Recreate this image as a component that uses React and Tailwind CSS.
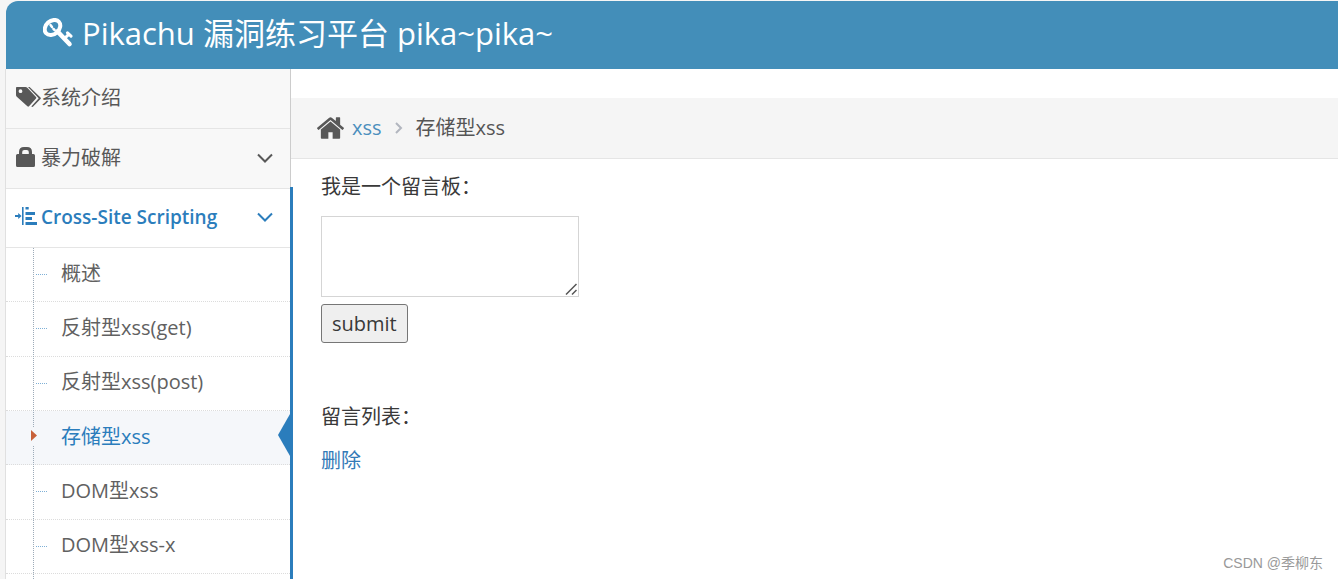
import React from "react";

const HOME =
  "M1472 992v480q0 26-19 45t-45 19h-384v-384h-256v384h-384q-26 0-45-19t-19-45v-480q0-1 .5-3t.5-3l575-474 575 474q1 2 1 6zm223-69l-62 74q-8 9-21 11h-3q-13 0-21-7l-692-577-692 577q-12 8-24 7-13-2-21-11l-62-74q-8-10-7-23.5t11-21.5l719-599q32-26 76-26t76 26l244 204v-195q0-14 9-23t23-9h192q14 0 23 9t9 23v408l219 182q10 8 11 21.5t-7 23.5z";

function KeyIcon() {
  return (
    <svg viewBox="0 0 30 30" className="h-[30px] w-[30px]" fill="none" stroke="currentColor" strokeLinecap="round" strokeLinejoin="round" aria-hidden="true">
      <ellipse cx="9.500" cy="9.500" rx="8.600" ry="6.600" transform="rotate(-42 9.500 9.500)" strokeWidth="4" />
      <path d="M7.500 7l1.500 2M10.500 11l1.200 1.200" strokeWidth="2.500" />
      <path d="M14.500 13.500L26.500 26" strokeWidth="4.600" />
      <path d="M21.500 20.500L26 16.200M24.500 14.800l3.500 3.400" strokeWidth="3" />
    </svg>
  );
}

function TagsIcon() {
  return (
    <svg viewBox="0 0 25 20" className="mb-0.5 h-5 w-[25px]" fill="currentColor" aria-hidden="true">
      <path fillRule="evenodd" d="M0 .8Q0 0 .8 0H9.500Q10.500 0 11.300.8L20 9.900Q20.700 10.700 20 11.500L13 19.300Q12.200 20 11.400 19.300L.8 9.700Q0 9 0 8zM4.500 2.300a1.900 1.900 0 100 3.800 1.900 1.900 0 000-3.800z" />
      <path d="M12 0h1.600L24.500 10.400Q25.200 11.200 24.500 12L17.200 19.600Q16.300 20.300 15.300 19.500L22.700 11.200z" />
    </svg>
  );
}

function LockIcon() {
  return (
    <svg viewBox="0 0 19 20" className="mr-[6px] mb-0.5 h-5 w-[19px]" fill="currentColor" aria-hidden="true">
      <path fillRule="evenodd" d="M3 7V5Q3 0 8 0h3q5 0 5 5v2h1.500Q19 7 19 8.500v10Q19 20 17.500 20h-16Q0 20 0 18.500v-10Q0 7 1.500 7zM6.200 7h6.600V5q0-2-2-2H8.200q-2 0-2 2z" />
    </svg>
  );
}

function HomeIcon() {
  return (
    <svg viewBox="90 0 1612 1792" className="h-[30px] w-[27px] text-[#585858]" fill="currentColor" aria-hidden="true">
      <path d={HOME} />
    </svg>
  );
}

function IndentIcon() {
  return (
    <svg viewBox="0 0 22 18" className="mb-0.5 h-[18px] w-[22px]" fill="currentColor" aria-hidden="true">
      <path d="M0 8.100h3.200V6L6.600 9l-3.400 3V9.900H0zM7 0h1.600v18H7zM10.500 0h3.200v2.500h-3.200zM10.500 5H20v3h-9.500zM10.500 10H17v3h-6.500zM10.500 15H22v3H10.500z" />
    </svg>
  );
}

function Chevron() {
  return (
    <svg viewBox="0 0 16 10" className="mr-[17px] ml-auto h-[10px] w-4" fill="none" stroke="currentColor" strokeWidth="2" aria-hidden="true">
      <path d="M1 1.500l7 7 7-7" />
    </svg>
  );
}

const items = [
  { label: "概述" },
  { label: "反射型xss(get)" },
  { label: "反射型xss(post)" },
  { label: "存储型xss", active: true },
  { label: "DOM型xss" },
  { label: "DOM型xss-x" },
];

function SubItem({ label, active }) {
  return (
    <li className={active ? "relative border-b border-dotted border-[#dcdcdc] bg-[#f5f7fa]" : "relative border-b border-dotted border-[#dcdcdc]"}>
      <a
        href="#item"
        aria-current={active ? "page" : undefined}
        className={active ? "flex h-full items-center pb-0.5 pl-[55px] text-[#2b7dbc]" : "flex h-full items-center pb-0.5 pl-[55px] text-[#616161]"}
      >
        {label}
      </a>
      {active ? (
        <>
          <span className="absolute top-4 left-6 z-10 flex h-[18px] w-3 items-center bg-[#f5f7fa]">
            <svg viewBox="0 0 6 11" className="ml-px h-[11px] w-[6px]" aria-hidden="true">
              <path d="M0 0l6 5.500-6 5.500z" fill="#c86139" />
            </svg>
          </span>
          <svg viewBox="0 0 12 42" className="absolute top-[3px] right-0 h-[42px] w-3" aria-hidden="true">
            <path d="M12 0v42L0 21z" fill="#2b7dbc" />
          </svg>
        </>
      ) : (
        <span className="absolute top-[26px] left-[30px] w-[11px] border-t border-dotted border-[#7fb0d6]" />
      )}
    </li>
  );
}

export default function App() {
  return (
    <div className="flex h-screen flex-col overflow-hidden bg-[#f5f5f5] pt-px pl-[5px] font-['Open_Sans','Noto_Sans_CJK_SC',sans-serif] text-[20px] leading-[30px] text-[#393939]">
      <header className="ml-px flex h-[68px] shrink-0 items-center rounded-tl-xl bg-[#438eb9] pl-[37px] text-white">
        <a href="#home" className="flex items-center gap-[9px] pb-1 text-[31px] leading-[40px]">
          <KeyIcon />
          <span>Pikachu 漏洞练习平台 pika~pika~</span>
        </a>
      </header>
      <div className="flex min-h-0 grow border-l border-[#e0e0e0] bg-white">
        <nav className="flex w-[285px] shrink-0 flex-col border-r border-[#ccc] text-[#585858]">
          <a href="#intro" className="flex h-[60px] shrink-0 items-center border-b border-[#e5e5e5] bg-[#f8f8f8] pb-0.5 pl-[10px]">
            <TagsIcon />
            <span>系统介绍</span>
          </a>
          <a href="#brute" className="flex h-[60px] shrink-0 items-center border-b border-[#e5e5e5] bg-[#f8f8f8] pb-0.5 pl-[10px]">
            <LockIcon />
            <span>暴力破解</span>
            <Chevron />
          </a>
          <div className="relative flex grow flex-col">
            <a href="#xss" className="flex h-[59px] shrink-0 items-center border-b border-[#e5e5e5] pb-0.5 pl-[9px] text-[19px] font-semibold text-[#2b7dbc]">
              <IndentIcon />
              <span className="ml-1">Cross-Site Scripting</span>
              <Chevron />
            </a>
            <div className="relative grow">
              <ul className="grid h-[326px] grid-rows-6">
                {items.map((item) => (
                  <SubItem key={item.label} {...item} />
                ))}
              </ul>
              <span className="absolute inset-y-0 left-[27px] border-l border-dotted border-[#9dabb8]" />
            </div>
            <span className="absolute -top-[2px] -right-[3px] bottom-0 w-[3px] bg-[#2b7dbc]" />
          </div>
        </nav>
        <main className="flex min-w-0 grow flex-col pt-[29px]">
          <nav aria-label="Breadcrumb" className="flex h-[61px] shrink-0 items-center border-b border-[#e5e5e5] bg-[#f5f5f5] pl-[26px]">
            <HomeIcon />
            <a href="#xss" className="ml-2 text-[#4c8fbd]">xss</a>
            <svg viewBox="0 0 8 12" className="mx-[13px] h-3 w-2" fill="none" stroke="#b2b6bf" strokeWidth="2" aria-hidden="true">
              <path d="M1 1l5 5-5 5" />
            </svg>
            <span className="text-[#555]">存储型xss</span>
          </nav>
          <form className="flex flex-col items-start px-[30px] pt-[13px]" onSubmit={(e) => e.preventDefault()}>
            <label htmlFor="message">我是一个留言板：</label>
            <div className="relative mt-[14px] flex">
              <textarea id="message" className="h-[81px] w-[258px] resize-none border border-[#d5d5d5] bg-white px-2 py-1 outline-none" />
              <svg viewBox="0 0 12 12" className="pointer-events-none absolute right-[2px] bottom-[2px] h-3 w-3" fill="none" stroke="#555" strokeWidth="1.500" aria-hidden="true">
                <path d="M1 11.500L11.500 1M7 11.500L11.500 7" />
              </svg>
            </div>
            <button type="submit" className="mt-[7px] h-[39px] rounded-[3px] border border-[#767676] bg-[#efefef] px-[10px]">
              submit
            </button>
          </form>
          <section className="px-[30px] pt-[59px]">
            <p>留言列表：</p>
            <a href="#delete" className="mt-[14px] inline-block text-[#337ab7]">删除</a>
          </section>
          <footer className="mt-auto pr-[15px] pb-1 text-right font-['Liberation_Sans','Noto_Sans_CJK_SC',sans-serif] text-[14px] leading-[24px] text-[#999]">
            CSDN @季柳东
          </footer>
        </main>
      </div>
    </div>
  );
}
